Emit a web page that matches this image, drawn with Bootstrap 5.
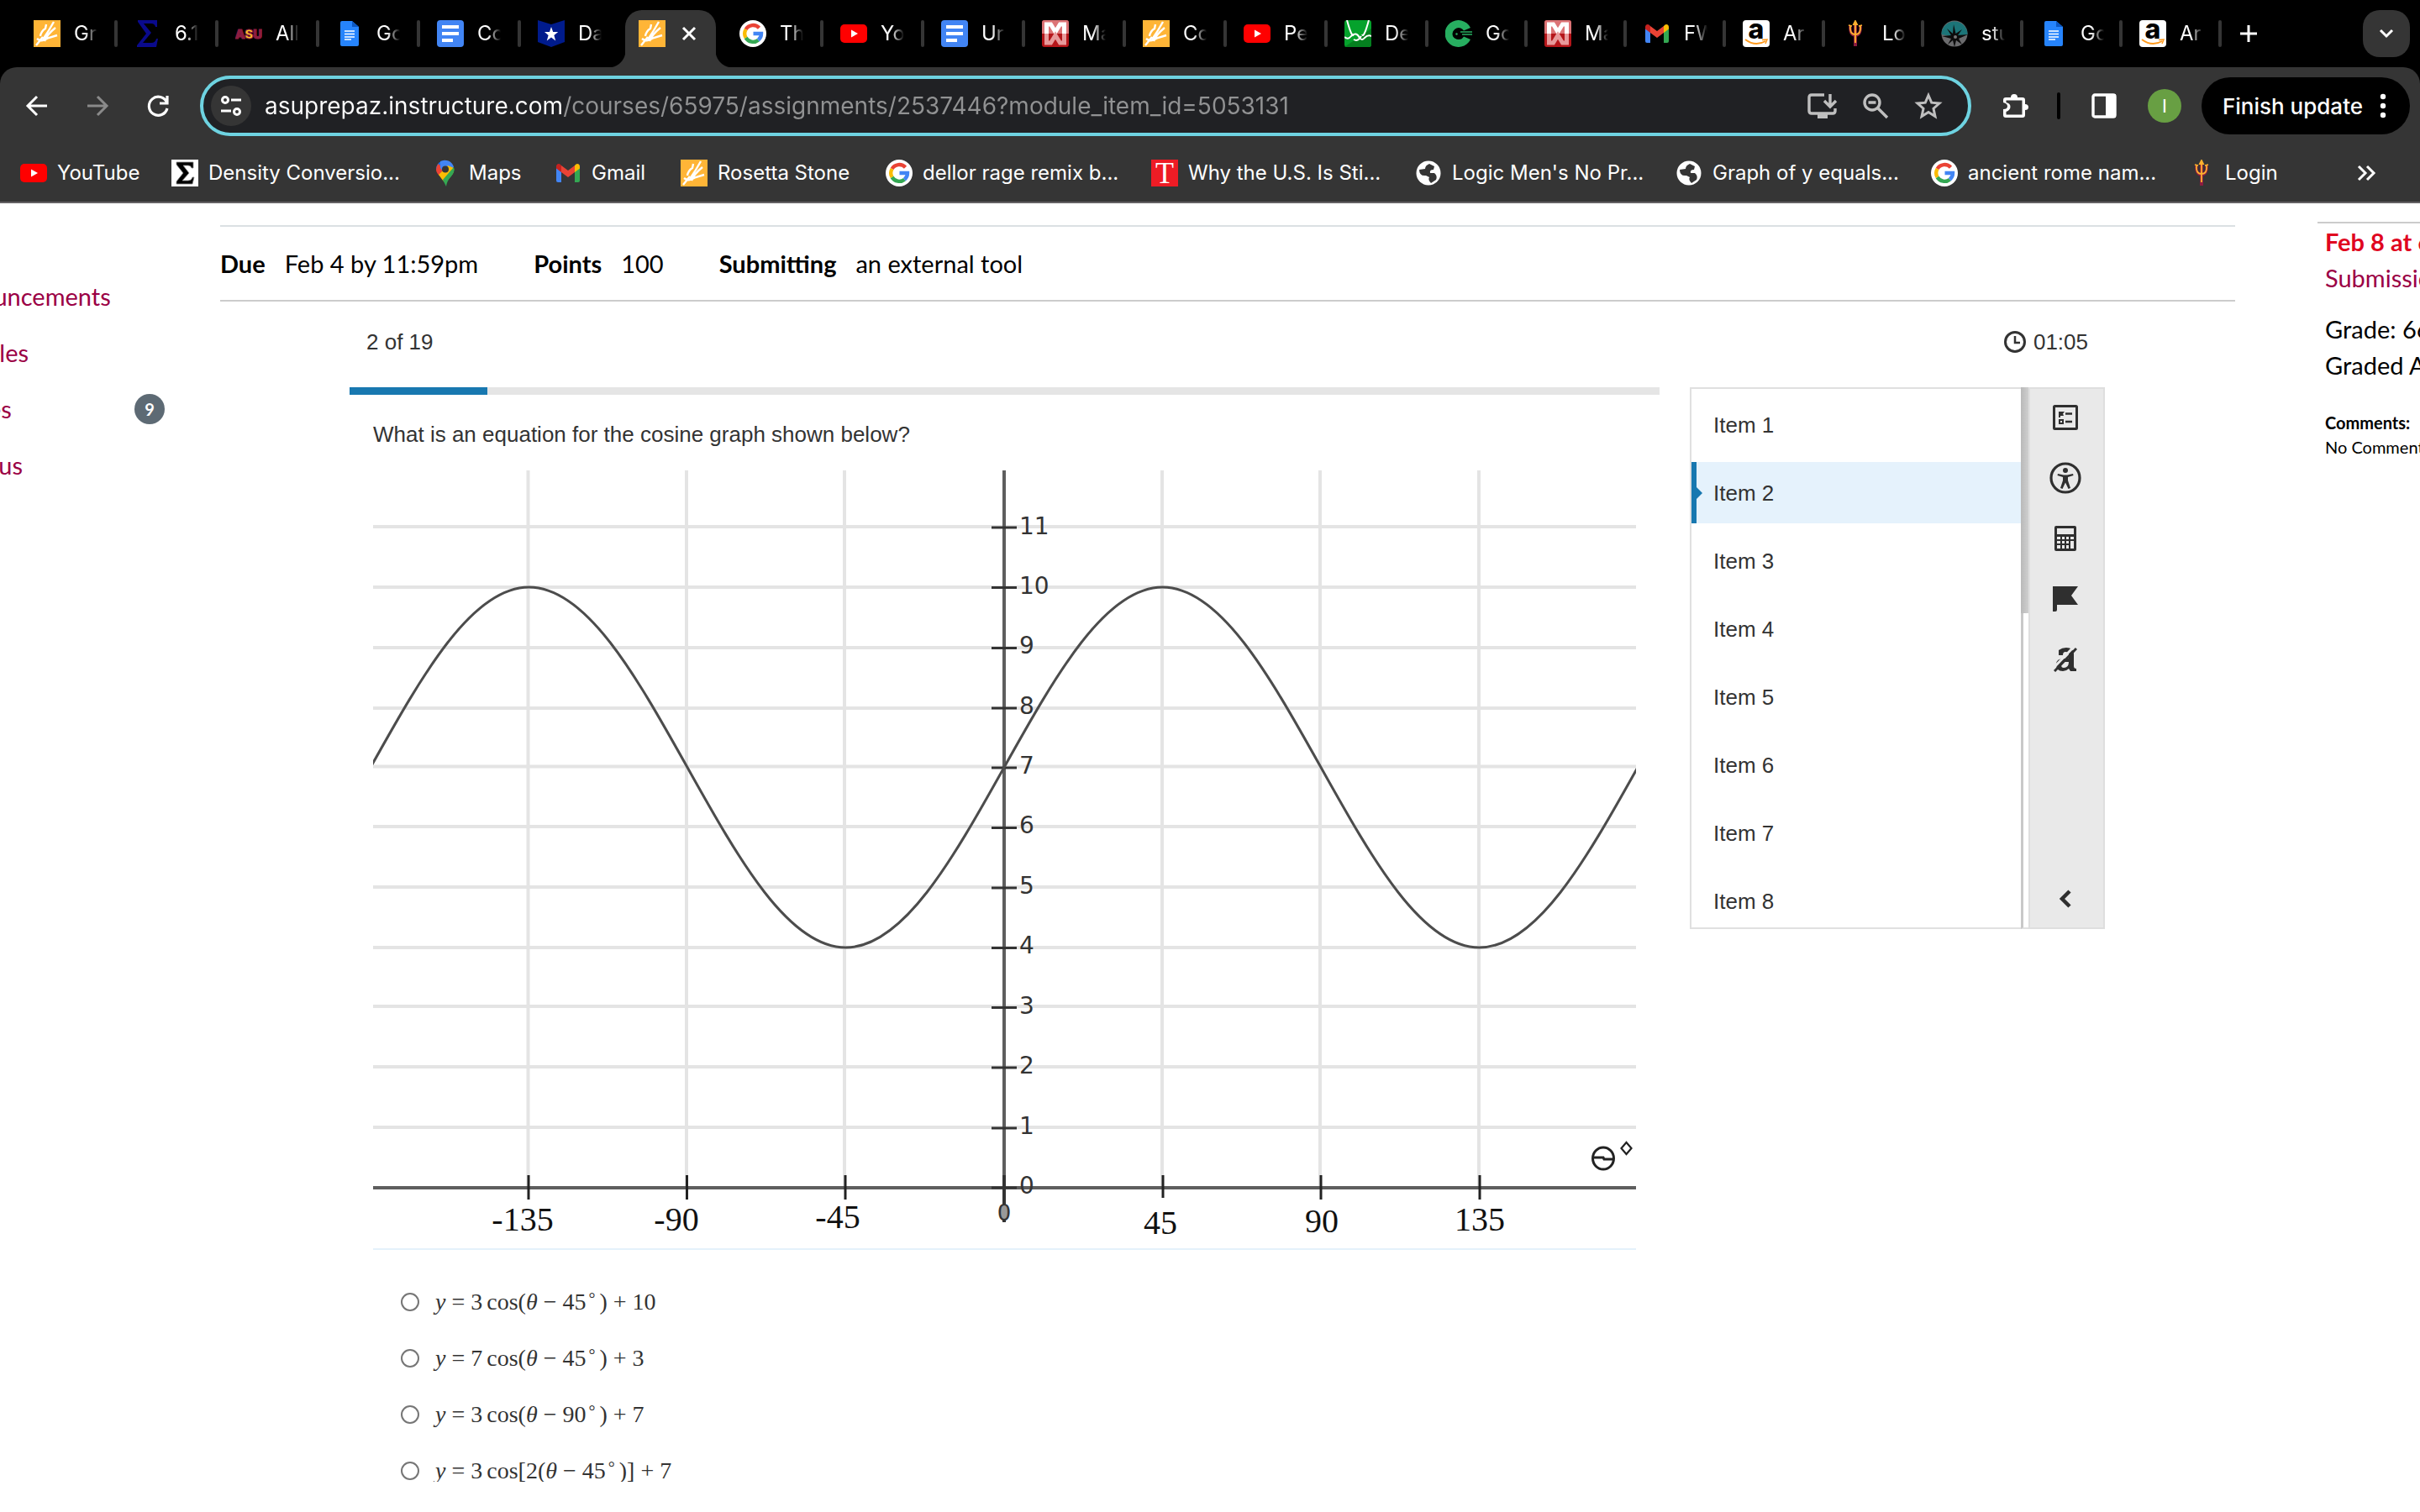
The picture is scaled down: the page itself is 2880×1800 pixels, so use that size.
<!DOCTYPE html>
<html lang="en">
<head>
<meta charset="utf-8">
<meta name="viewport" content="width=device-width, initial-scale=1">
<title>Assignment</title>
<link href="https://cdn.jsdelivr.net/npm/bootstrap@5.3.0/dist/css/bootstrap.min.css" rel="stylesheet">
<style>
  body { font-family: Lato, "Open Sans", sans-serif; font-size: 29px; color: #000; background: #fff; overflow: hidden; }
  a { text-decoration: none; }
  svg { flex: none; display: block; }
  .i32 { width: 32px; height: 32px; }
  button { padding: 0; border: 0; background: none; color: inherit; flex: none; }

  /* browser window */
  .browser { font-family: Inter, Roboto, sans-serif; color: #fff; background: #000; }
  .tabstrip { height: 80px; padding: 0 12px 0 20px; }
  .tab { position: relative; width: 120px; height: 68px; padding: 0 0 12px 20px; gap: 16px; font-size: 24px; color: #fff; flex: none; }
  .tab.slim { width: 118px; }
  .tab::after { content: ""; position: absolute; right: 0; top: 12px; width: 4px; height: 32px; border-radius: 2px; background: #353535; }
  .tab.bare::after { display: none; }
  .tab .name { width: 28px; overflow: hidden; white-space: nowrap; -webkit-mask-image: linear-gradient(90deg, #000 45%, transparent); mask-image: linear-gradient(90deg, #000 45%, transparent); }
  .tab.open { width: 108px; margin: 0 8px 0 4px; padding-left: 16px; background: #353535; border-radius: 20px 20px 0 0; }
  .tab.open::before { content: ""; position: absolute; left: -20px; right: -20px; bottom: 0; height: 20px; background: radial-gradient(circle at 0 0, transparent 20px, #353535 21px) left / 20px 20px no-repeat, radial-gradient(circle at 100% 0, transparent 20px, #353535 21px) right / 20px 20px no-repeat; }
  .tab.open::after { display: none; }
  .tabmenu { width: 56px; height: 56px; border-radius: 20px; background: #353535; }
  .toolbar { height: 92px; padding: 0 12px 0 28px; background: #353535; border-radius: 20px 20px 0 0; }
  .history { gap: 40px; }
  .omnibox { height: 72px; border: 4px solid #6ed3e1; border-radius: 36px; background: #202124; padding: 0 27px 0 9px; margin: 0 36px 0 34px; }
  .siteinfo { width: 48px; height: 48px; border-radius: 50%; background: #353535; }
  .address { border: 0; outline: 0; padding: 0; margin-left: 16px; font-size: 28px; min-width: 0; color: transparent; -webkit-text-fill-color: transparent; background: linear-gradient(90deg, #fff 354px, #919293 354px); -webkit-background-clip: text; background-clip: text; }
  .avatar { width: 40px; height: 40px; border-radius: 50%; background: #689f43; font-size: 22px; margin: 0 24px 0 36px; }
  .update { height: 68px; border-radius: 34px; background: #000; font-size: 26px; font-weight: 500; padding: 0 28px 0 25px; gap: 20px; }
  .sep { width: 4px; height: 32px; border-radius: 2px; background: #000; margin: 0 36px 0 34px; }
  .bookmarks { display: grid; grid-template-columns: 180px 310px 146px 150px 244px 316px 314px 310px 304px 306px 1fr 128px; height: 70px; padding-left: 24px; background: #353535; border-bottom: 2px solid #636163; font-size: 24px; }
  .bookmarks a { display: flex; align-items: center; gap: 12px; color: #fff; white-space: nowrap; }

  /* course page */
  .coursenav { width: 262px; flex: none; padding-top: 89px; }
  .coursenav a { color: #9b0045; line-height: 44px; height: 67px; margin-left: -76px; padding-right: 66px; }
  .count { width: 36px; height: 36px; border-radius: 50%; background: #5d6a74; color: #fff; font-size: 20px; font-weight: 700; line-height: 36px; text-align: center; }
  .facts { margin-top: 26px; height: 91px; border-top: 2px solid #dbe0e3; border-bottom: 2px solid #ccc; gap: 66px; }
  .facts dt { font-weight: 700; }
  .facts div { gap: 23px; }
  .quiz { margin: 0 155px 0 154px; font-family: "Liberation Sans", Arial, sans-serif; font-size: 26px; color: #333; }
  .quizhead { height: 102px; padding: 26px 20px 0; line-height: 44px; }
  .progress.done { height: 9px; border-radius: 0; background: #e5e5e5; --bs-progress-bar-bg: #1878b0; }
  .body-pane { padding: 0 28px; }
  .prompt { line-height: 32px; margin: 31px 0 27px; }
  .chart { width: 100%; height: auto; border-bottom: 2px solid #e4f1fb; overflow: hidden; }
  .answers { padding: 28px 0 0 33px; height: 276px; overflow: hidden; }
  .answer { height: 67px; gap: 19px; }
  .answer input { appearance: none; width: 22px; height: 22px; border: 2px solid #767676; border-radius: 50%; margin: 0; background: #fff; flex: none; }
  .math { font-family: "Liberation Serif", "Times New Roman", serif; font-size: 28px; line-height: 44px; color: #333; white-space: nowrap; }
  .math .op { padding: 0 7px; }
  .math .fn { padding-left: 5px; }
  .math sup { font-size: 20px; top: -6px; padding: 0 5px 0 3px; }
  .panel { width: 494px; height: 645px; flex: none; margin-left: 36px; }
  .items { border: 2px solid #e0e0e0; border-right: 0; overflow: hidden; padding-top: 6px; }
  .items a { position: relative; display: flex; align-items: center; height: 73px; margin-bottom: 8px; padding-left: 26px; color: #333; line-height: 32px; }
  .items a.active { background: #e5f2fc; border-left: 6px solid #1878b0; padding-left: 20px; }
  .items a.active::before { content: ""; position: absolute; left: 0; top: 30px; border: 7px solid transparent; border-left-color: #1878b0; border-right: 0; }
  .track { width: 9px; border-left: 3px solid #c8c8c8; background: #fff; border-bottom: 2px solid #e0e0e0; }
  .thumb { width: 9px; height: 269px; margin-left: -3px; background: linear-gradient(90deg, #b9b9b9, #cfcfcf); }
  .tools { width: 91px; background: #e9e9e9; border: 2px solid #dedede; color: #2f2f2f; padding: 14px 4px 14px 0; }
  .tools button { height: 40px; margin-bottom: 32px; }
  .sidebar { width: 220px; flex: none; padding: 22px 0 0 98px; overflow: hidden; white-space: nowrap; line-height: 43px; }
  .sideinner { border-top: 2px solid #ccc; padding-left: 9px; }
  .sideinner .due { color: #e0061f; font-weight: 700; }
  .sideinner a { color: #9b0045; }
  .grade { margin-top: 18px; }
  .notes { font-size: 20px; line-height: 29px; margin-top: 33px; }
</style>
</head>
<body>

<svg width="0" height="0" class="position-absolute" aria-hidden="true">
  <symbol id="fork" viewBox="0 0 32 32"><rect width="32" height="32" fill="#ffb537"/><path d="M3 30L11 20M4 22q5 4 10 1l4-2 10-3M8 19q1-6 6-9l1-5M11 23Q18 13 24 2M13 25q3-8 13-16" fill="none" stroke="#fff" stroke-width="2.400"/></symbol>
  <symbol id="sigma" viewBox="0 0 32 32"><path d="M4 0h23v8h-2q-1-4-5-4h-9l9 11-10 12h10q5 0 6-5h2l-2 10H3v-2l11-14L4 2z" fill="#0a0a8c"/></symbol>
  <symbol id="sigmaw" viewBox="0 0 32 32"><rect width="32" height="32" fill="#fff"/><path d="M6 3h20v7h-2q-1-3-4-3h-6l7 9-8 9h7q4 0 5-4h2l-2 8H6v-3l8-10-8-10z" fill="#000" stroke="#888" stroke-width=".8"/></symbol>
  <symbol id="doc" viewBox="0 0 32 32"><path d="M7 1h12l8 7v21q0 2-2 2H7q-2 0-2-2V3q0-2 2-2z" fill="#2684fc"/><path d="M19 1l8 7h-8z" fill="#0b57c2"/><path d="M10 13h12M10 16.500h12M10 20h12M10 23h8" stroke="#fff" stroke-width="1.600"/></symbol>
  <symbol id="form" viewBox="0 0 32 32"><rect width="32" height="32" rx="4" fill="#4285f4"/><path d="M6 8h20M6 16h20M6 24h13" stroke="#fff" stroke-width="4"/></symbol>
  <symbol id="shield" viewBox="0 0 32 32"><path d="M0 0l16 5L32 0v26l-16 6-16-6z" fill="#001b8c"/><path d="M16 8l2.200 6h6l-4.800 4 1.800 6.500L16 20.500l-5.200 4 1.800-6.500L8 14h6z" fill="#fff"/></symbol>
  <symbol id="google" viewBox="0 0 32 32"><circle cx="16" cy="16" r="16" fill="#fff"/><g fill="none" stroke-width="4.400"><path d="M23.500 9.200A10 10 0 0 0 7.600 11" stroke="#ea4335"/><path d="M7.600 11a10 10 0 0 0 0 10" stroke="#fbbc05"/><path d="M7.600 21a10 10 0 0 0 14.800 2.700" stroke="#34a853"/><path d="M22.400 23.700A10 10 0 0 0 26 16H16.500" stroke="#4285f4"/></g></symbol>
  <symbol id="yt" viewBox="0 0 32 32"><rect y="5" width="32" height="22" rx="5" fill="#f00"/><path d="M13 11.500v9l8-4.500z" fill="#fff"/></symbol>
  <symbol id="mm" viewBox="0 0 32 32"><rect width="32" height="32" rx="3" fill="#b5161a"/><path d="M0 16V3q0-3 3-3h26q3 0 3 3v13z" fill="#dc7476"/><path d="M5.500 16V5h5L16 14l5.500-9h5v11" fill="none" stroke="#fff" stroke-width="5"/><path d="M5.500 16v11h5L16 18l5.500 9h5V16" fill="none" stroke="#e79a9b" stroke-width="5"/></symbol>
  <symbol id="graphw" viewBox="0 0 32 32"><rect width="32" height="32" rx="3" fill="#05a22c"/><path d="M0 32L32 10v19q0 3-3 3z" fill="#04801f"/><path d="M3 0q6 22 8 17M29 0q-6 22-8 17M0 20q4 4 8-1 6-6 10 2 3 4 6 0 4-4 8-2M11 23q5 3 9-4" fill="none" stroke="#fff" stroke-width="2"/></symbol>
  <symbol id="keyc" viewBox="0 0 32 32"><path d="M30 9A16 16 0 1 0 30 23l-8-3.500q-2 3.500-6 3.500a7 7 0 1 1 6-10.500z" fill="#27ae60"/><circle cx="14" cy="16.500" r="3.500" fill="none" stroke="#000" stroke-width="4"/><circle cx="13.500" cy="16.500" r="1.200" fill="#27ae60"/><path d="M18 14h14M20 17h12" stroke="#27ae60" stroke-width="1.500"/></symbol>
  <symbol id="gmail" viewBox="0 0 32 32"><path d="M2 8v17q0 2 2 2h4V13z" fill="#4285f4"/><path d="M30 8v17q0 2-2 2h-4V13z" fill="#34a853"/><path d="M8 7l8 6 8-6v8l-8 6-8-6z" fill="#ea4335"/><path d="M2 8.500Q2 5 5 5q1.500 0 3 2v8l-6-4.500z" fill="#c5221f"/><path d="M30 8.500Q30 5 27 5q-1.500 0-3 2v8l6-4.500z" fill="#fbbc04"/></symbol>
  <symbol id="trident" viewBox="0 0 32 32"><path d="M16 4v27" stroke="#8c1d40" stroke-width="4"/><path d="M10 6q-1 12 6 12t6-12" fill="none" stroke="#8c1d40" stroke-width="3.500"/><path d="M16 3v24M10 7q-1 10 6 10t6-10M8 6l4 1M24 6l-4 1M14 5l2-4 2 4z" fill="none" stroke="#ffb02e" stroke-width="1.800"/></symbol>
  <symbol id="compass" viewBox="0 0 32 32"><circle cx="16" cy="16" r="15.500" fill="#6b6b6d"/><path d="M.5 17a15.500 15.500 0 0 1 31 0l-15 3z" fill="#1c7578"/><path d="M15 5l2.500 11L25 11l-5 7 12-1-11 5 4 7-7-5-2 8-2-8-6 5 4-7-11-3 11-1-5-8 7 6z" fill="#0c0c0c"/><circle cx="17" cy="20" r="2" fill="#777"/></symbol>
  <symbol id="pin" viewBox="0 0 32 32"><path d="M5 12A11 11 0 0 1 11 2l8 7z" fill="#1a73e8"/><path d="M5 12q0-4 2.500-7l7 6-6 8Q5 15 5 12z" fill="#ea4335"/><path d="M10 2a11 11 0 0 1 16 7l-9 9-7-8z" fill="#4285f4"/><path d="M8 18L19 7l7 3q1 5-3 9l-7 9q-4-4-8-10z" fill="#fbbc04"/><path d="M26 9q2 5-3 11-5 5-6 12-2-4-4-8z" fill="#34a853"/><circle cx="16" cy="11.500" r="4" fill="#353535"/></symbol>
  <symbol id="globe" viewBox="0 0 32 32"><circle cx="16" cy="16" r="14.500" fill="#fff"/><path d="M17 5q-5 2-5 6l-7 1q0 8 8 7l4 2q-2 3 2 7l6-4q2-5-2-8h-5q-1-4 4-4l1-4z" fill="#353535"/></symbol>
  <symbol id="smile" viewBox="0 0 32 32"><path d="M3 23q12 9 24 2" fill="none" stroke="#ff9a1c" stroke-width="2"/><path d="M23 23.500l6-.5-2 5" fill="none" stroke="#ff9a1c" stroke-width="1.500"/></symbol>
</svg>

<header class="browser">
  <nav class="tabstrip d-flex align-items-end" aria-label="Tabs">
    <a href="#" class="tab d-flex align-items-center"><svg class="i32"><use href="#fork"/></svg><span class="name">Gr</span></a>
    <a href="#" class="tab d-flex align-items-center"><svg class="i32"><use href="#sigma"/></svg><span class="name">6.1</span></a>
    <a href="#" class="tab d-flex align-items-center"><svg class="i32" viewBox="0 0 32 32"><text x="16" y="22" font-family="Inter,sans-serif" font-weight="900" font-size="15" text-anchor="middle" fill="#8c1d40" stroke="#8c1d40">A<tspan fill="#ffc627">S</tspan>U</text></svg><span class="name">All</span></a>
    <a href="#" class="tab d-flex align-items-center"><svg class="i32"><use href="#doc"/></svg><span class="name">Go</span></a>
    <a href="#" class="tab d-flex align-items-center"><svg class="i32"><use href="#form"/></svg><span class="name">Co</span></a>
    <a href="#" class="tab bare d-flex align-items-center"><svg class="i32"><use href="#shield"/></svg><span class="name">Da</span></a>
    <a href="#" class="tab open d-flex align-items-center"><svg class="i32"><use href="#fork"/></svg><svg width="24" height="24" viewBox="0 0 24 24"><path d="M5 5l14 14M19 5L5 19" stroke="#fff" stroke-width="3"/></svg></a>
    <a href="#" class="tab d-flex align-items-center"><svg class="i32"><use href="#google"/></svg><span class="name">Th</span></a>
    <a href="#" class="tab d-flex align-items-center"><svg class="i32"><use href="#yt"/></svg><span class="name">Yo</span></a>
    <a href="#" class="tab d-flex align-items-center"><svg class="i32"><use href="#form"/></svg><span class="name">Ur</span></a>
    <a href="#" class="tab d-flex align-items-center"><svg class="i32"><use href="#mm"/></svg><span class="name">Ma</span></a>
    <a href="#" class="tab d-flex align-items-center"><svg class="i32"><use href="#fork"/></svg><span class="name">Co</span></a>
    <a href="#" class="tab d-flex align-items-center"><svg class="i32"><use href="#yt"/></svg><span class="name">Pe</span></a>
    <a href="#" class="tab d-flex align-items-center"><svg class="i32"><use href="#graphw"/></svg><span class="name">De</span></a>
    <a href="#" class="tab slim d-flex align-items-center"><svg class="i32"><use href="#keyc"/></svg><span class="name">Go</span></a>
    <a href="#" class="tab slim d-flex align-items-center"><svg class="i32"><use href="#mm"/></svg><span class="name">Ma</span></a>
    <a href="#" class="tab slim d-flex align-items-center"><svg class="i32"><use href="#gmail"/></svg><span class="name">FW</span></a>
    <a href="#" class="tab slim d-flex align-items-center"><svg class="i32" viewBox="0 0 32 32"><rect width="32" height="32" rx="4" fill="#fff"/><text x="16" y="22" font-family="Inter,sans-serif" font-weight="800" font-size="32" text-anchor="middle">a</text><use href="#smile"/></svg><span class="name">Ar</span></a>
    <a href="#" class="tab slim d-flex align-items-center"><svg class="i32"><use href="#trident"/></svg><span class="name">Lo</span></a>
    <a href="#" class="tab slim d-flex align-items-center"><svg class="i32"><use href="#compass"/></svg><span class="name">stu</span></a>
    <a href="#" class="tab slim d-flex align-items-center"><svg class="i32"><use href="#doc"/></svg><span class="name">Go</span></a>
    <a href="#" class="tab slim d-flex align-items-center"><svg class="i32" viewBox="0 0 32 32"><rect width="32" height="32" rx="4" fill="#fff"/><text x="16" y="22" font-family="Inter,sans-serif" font-weight="800" font-size="32" text-anchor="middle">a</text><use href="#smile"/></svg><span class="name">Ar</span></a>
    <button class="align-self-center ms-3" aria-label="New tab"><svg class="i32" viewBox="0 0 32 32"><path d="M16 6v20M6 16h20" stroke="#fff" stroke-width="3"/></svg></button>
    <button class="tabmenu align-self-center ms-auto d-flex align-items-center justify-content-center" aria-label="Search tabs"><svg width="20" height="20" viewBox="0 0 20 20"><path d="M3 6l7 7 7-7" fill="none" stroke="#fff" stroke-width="3"/></svg></button>
  </nav>

  <div class="toolbar d-flex align-items-center">
    <div class="history d-flex">
      <button aria-label="Back"><svg class="i32" viewBox="0 0 32 32"><path d="M28 16H6M16 5L5 16l11 11" fill="none" stroke="#fff" stroke-width="3"/></svg></button>
      <button aria-label="Forward"><svg class="i32" viewBox="0 0 32 32"><path d="M4 16h22M16 5l11 11-11 11" fill="none" stroke="#8a8a8a" stroke-width="3"/></svg></button>
      <button aria-label="Reload"><svg class="i32" viewBox="0 0 32 32"><path d="M26.500 12A11 11 0 1 0 27 19M27 4v9h-9" fill="none" stroke="#fff" stroke-width="3.200"/></svg></button>
    </div>
    <div class="omnibox d-flex align-items-center flex-grow-1">
      <button class="siteinfo d-flex align-items-center justify-content-center" aria-label="Site information"><svg width="26" height="26" viewBox="0 0 26 26"><g fill="none" stroke="#fff" stroke-width="3"><circle cx="6" cy="6" r="3.500"/><path d="M13 6h12M1 19h12"/><circle cx="20" cy="20" r="3.500"/></g></svg></button>
      <input class="address flex-grow-1" type="text" aria-label="Address" value="asuprepaz.instructure.com/courses/65975/assignments/2537446?module_item_id=5053131">
      <div class="d-flex gap-4">
        <button aria-label="Install"><svg width="36" height="32" viewBox="0 0 36 32"><path d="M20 3H5q-3 0-3 3v16q0 3 3 3h25q3 0 3-3v-3" fill="none" stroke="#bfbfbf" stroke-width="3.400"/><path d="M12 26h12v5H12z" fill="#bfbfbf"/><path d="M27 2v14M20 10l7 7 7-7" fill="none" stroke="#bfbfbf" stroke-width="3.400"/></svg></button>
        <button aria-label="Zoom"><svg width="40" height="32" viewBox="-4 0 40 32"><g fill="none" stroke="#bfbfbf" stroke-width="3.400"><circle cx="13" cy="12" r="9"/><path d="M8.500 12h9M19 18l12 12"/></g></svg></button>
        <button aria-label="Bookmark"><svg width="40" height="32" viewBox="-4 0 40 32"><path d="M16 3.500l3.700 8.700 9.300.8-7 6.200 2 9.300-8-5-8 5 2-9.300L3 13l9.300-.8z" fill="none" stroke="#bfbfbf" stroke-width="3"/></svg></button>
      </div>
    </div>
    <button aria-label="Extensions"><svg class="i32" viewBox="0 0 32 32"><path d="M3 6h8q0-4 4-4t4 4h6q3 0 3 3v5q4 0 4 3.500T28 21v6q0 3-3 3H5q-3 0-3-3v-7q5 0 5-3.500T2 12V9q0-3 3-3z" fill="#fff"/><path d="M5.500 9.500h19v17h-19v-3.500q5-2 5-6t-5-5z" fill="#353535"/></svg></button>
    <div class="sep"></div>
    <button aria-label="Side panel"><svg class="i32" viewBox="0 0 32 32"><rect x="3" y="3" width="26" height="26" rx="2" fill="none" stroke="#fff" stroke-width="3.400"/><path d="M18 2h12v28H18z" fill="#fff"/></svg></button>
    <button class="avatar d-flex align-items-center justify-content-center" aria-label="Profile">I</button>
    <button class="update d-flex align-items-center">Finish update<svg width="8" height="32" viewBox="0 0 8 32"><g fill="#fff"><circle cx="4" cy="5" r="3.200"/><circle cx="4" cy="16" r="3.200"/><circle cx="4" cy="27" r="3.200"/></g></svg></button>
  </div>

  <nav class="bookmarks" aria-label="Bookmarks">
    <a href="#"><svg class="i32"><use href="#yt"/></svg>YouTube</a>
    <a href="#"><svg class="i32"><use href="#sigmaw"/></svg>Density Conversio...</a>
    <a href="#"><svg class="i32"><use href="#pin"/></svg>Maps</a>
    <a href="#"><svg class="i32"><use href="#gmail"/></svg>Gmail</a>
    <a href="#"><svg class="i32"><use href="#fork"/></svg>Rosetta Stone</a>
    <a href="#"><svg class="i32"><use href="#google"/></svg>dellor rage remix b...</a>
    <a href="#"><svg class="i32" viewBox="0 0 32 32"><rect width="32" height="32" fill="#ee1c25"/><text x="16" y="28" font-family="Liberation Serif,serif" font-size="36" text-anchor="middle" fill="#fff">T</text></svg>Why the U.S. Is Sti...</a>
    <a href="#"><svg class="i32"><use href="#globe"/></svg>Logic Men's No Pr...</a>
    <a href="#"><svg class="i32"><use href="#globe"/></svg>Graph of y equals...</a>
    <a href="#"><svg class="i32"><use href="#google"/></svg>ancient rome nam...</a>
    <a href="#"><svg class="i32"><use href="#trident"/></svg>Login</a>
    <button class="d-flex align-items-center justify-content-center" aria-label="More bookmarks"><svg width="24" height="24" viewBox="0 0 24 24"><path d="M3 4l8 8-8 8M13 4l8 8-8 8" fill="none" stroke="#fff" stroke-width="3"/></svg></button>
  </nav>
</header>

<div class="d-flex">
  <nav class="coursenav d-flex flex-column" aria-label="Course">
    <a href="#">Announcements</a>
    <a href="#">Modules</a>
    <a href="#" class="d-flex justify-content-between">Grades<span class="count mt-1">9</span></a>
    <a href="#">Syllabus</a>
  </nav>

  <main class="flex-grow-1">
    <dl class="facts d-flex align-items-center mb-0">
      <div class="d-flex"><dt>Due</dt><dd class="mb-0">Feb 4 by 11:59pm</dd></div>
      <div class="d-flex"><dt>Points</dt><dd class="mb-0">100</dd></div>
      <div class="d-flex"><dt>Submitting</dt><dd class="mb-0">an external tool</dd></div>
    </dl>

    <section class="quiz">
      <div class="quizhead d-flex justify-content-between">
        <span>2 of 19</span>
        <span class="d-flex align-items-center gap-2 align-self-start"><svg width="28" height="28" viewBox="0 0 28 28"><circle cx="14" cy="14" r="11.500" fill="none" stroke="#333" stroke-width="3"/><path d="M14 7v8h6" fill="none" stroke="#333" stroke-width="2.500"/></svg>01:05</span>
      </div>
      <div class="d-flex align-items-start">
        <div class="flex-grow-1">
          <div class="progress done" role="progressbar" aria-label="Progress" aria-valuenow="2" aria-valuemin="0" aria-valuemax="19"><div class="progress-bar" style="width:10.530%"></div></div>
          <div class="body-pane">
            <p class="prompt">What is an equation for the cosine graph shown below?</p>
            <svg class="chart" viewBox="0 0 1503 926" role="img" aria-label="Cosine graph">
              <g stroke="#e4e4e4" stroke-width="4" fill="none">
                <path d="M184.500 0V854M373 0V854M561 0V854M939 0V854M1127 0V854M1316 0V854"/>
                <path d="M0 67H1503M0 139H1503M0 211H1503M0 283H1503M0 352.500H1503M0 424H1503M0 496H1503M0 568H1503M0 638H1503M0 710H1503M0 782H1503"/>
              </g>
              <path d="M0 854H1503" stroke="#5e5e5e" stroke-width="4"/>
              <path d="M751 0V880" stroke="#5e5e5e" stroke-width="4"/>
              <path d="M736 68h30M736 139.500h30M736 211.500h30M736 283h30M736 354h30M736 425.500h30M736 497h30M736 568.500h30M736 639.500h30M736 711h30M736 783h30M736 854h30" stroke="#333" stroke-width="3"/>
              <path d="M185 839v29M373.500 839v29M562 839v29M940 839v27M1128 839v29M1317 839v29" stroke="#222" stroke-width="3"/>
              <path d="M751 839v56" stroke="#333" stroke-width="4"/>
              <path d="M-3 353.500C58.500 243.600 117.300 139 185.500 139C253.700 139 312.500 243.600 374 353.500C435.500 463.400 494.300 568 562.500 568C630.700 568 689.500 463.400 751 353.500C812.500 243.600 871.300 139 939.500 139C1007.700 139 1066.500 243.600 1128 353.500C1189.500 463.400 1248.300 568 1316.500 568C1384.700 568 1443.500 463.400 1505 353.500" fill="none" stroke="#4c4c4c" stroke-width="3"/>
              <g font-family="DejaVu Sans, sans-serif" font-size="28" fill="#333">
                <text x="769" y="76">11</text><text x="769" y="147">10</text><text x="769" y="218">9</text><text x="769" y="290">8</text><text x="769" y="361">7</text><text x="769" y="432">6</text><text x="769" y="504">5</text><text x="769" y="575">4</text><text x="769" y="647">3</text><text x="769" y="718">2</text><text x="769" y="790">1</text><text x="769" y="861">0</text>
                <ellipse cx="751" cy="883" rx="5" ry="9" fill="#999"/>
                <text x="751" y="893" text-anchor="middle" font-size="26">0</text>
              </g>
              <g font-family="Liberation Serif, serif" font-size="40" fill="#111" text-anchor="middle">
                <text x="178" y="905">-135</text><text x="361" y="905">-90</text><text x="553" y="902">-45</text><text x="937" y="909">45</text><text x="1129" y="907">90</text><text x="1317" y="905">135</text>
              </g>
              <g fill="none" stroke="#222" stroke-width="3"><ellipse cx="1464" cy="819" rx="12.500" ry="13"/><path d="M1453 818h11l1 2h11"/><path d="M1491.500 800l6 7-6 7-6-7z" stroke-width="2.200"/></g>
            </svg>
            <div class="answers">
              <label class="answer d-flex align-items-center"><input type="radio" name="answer"><span class="math"><i>y</i><span class="op">=</span>3<span class="fn">cos</span>(<i>θ</i><span class="op">−</span>45<sup>°</sup>)<span class="op">+</span>10</span></label>
              <label class="answer d-flex align-items-center"><input type="radio" name="answer"><span class="math"><i>y</i><span class="op">=</span>7<span class="fn">cos</span>(<i>θ</i><span class="op">−</span>45<sup>°</sup>)<span class="op">+</span>3</span></label>
              <label class="answer d-flex align-items-center"><input type="radio" name="answer"><span class="math"><i>y</i><span class="op">=</span>3<span class="fn">cos</span>(<i>θ</i><span class="op">−</span>90<sup>°</sup>)<span class="op">+</span>7</span></label>
              <label class="answer d-flex align-items-center"><input type="radio" name="answer"><span class="math"><i>y</i><span class="op">=</span>3<span class="fn">cos</span>[2(<i>θ</i><span class="op">−</span>45<sup>°</sup>)]<span class="op">+</span>7</span></label>
            </div>
          </div>
        </div>

        <aside class="panel d-flex">
          <nav class="items flex-grow-1" aria-label="Items">
            <a href="#">Item 1</a>
            <a href="#" class="active" aria-current="true">Item 2</a>
            <a href="#">Item 3</a>
            <a href="#">Item 4</a>
            <a href="#">Item 5</a>
            <a href="#">Item 6</a>
            <a href="#">Item 7</a>
            <a href="#">Item 8</a>
          </nav>
          <div class="track"><div class="thumb"></div></div>
          <div class="tools d-flex flex-column align-items-center">
            <button aria-label="Item list"><svg width="30" height="30" viewBox="0 0 30 30"><rect x="1.500" y="1.500" width="27" height="27" rx="1" fill="none" stroke="currentColor" stroke-width="3"/><path d="M15 10.500h8M15 20h8" stroke="currentColor" stroke-width="2.500"/><path d="M7 8h7l-2 2.500 1 2.500H9v2H7z" fill="currentColor"/><rect x="8" y="18" width="4" height="4" fill="none" stroke="currentColor" stroke-width="2"/></svg></button>
            <button aria-label="Accessibility"><svg width="38" height="38" viewBox="0 0 38 38"><circle cx="19" cy="19" r="17" fill="none" stroke="currentColor" stroke-width="3.200"/><circle cx="19" cy="10" r="3" fill="currentColor"/><path d="M10 14l7 1.500h4l7-1.500.5 2-6.500 2v4l3 9-2.500 1L19 24.500 15.500 32l-2.500-1 3-9v-4l-6.500-2z" fill="currentColor"/></svg></button>
            <button aria-label="Calculator"><svg width="26" height="30" viewBox="0 0 26 30"><rect width="26" height="30" rx="2" fill="currentColor"/><path d="M3 3h20v7H3z" fill="#e9e9e9"/><path d="M3 13h4v3H3zM9 13h3v3H9zM14 13h3v3h-3zM19 13h4v3h-4zM3 18h4v3H3zM9 18h3v3H9zM14 18h3v3h-3zM3 23h4v4H3zM9 23h3v4H9zM14 23h3v4h-3zM19 18h4v9h-4z" fill="#e9e9e9"/></svg></button>
            <button aria-label="Flag"><svg width="30" height="30" viewBox="0 0 30 30"><path d="M0 0h30l-8 11 8 11H5v6q0 2-2 2H0z" fill="currentColor"/></svg></button>
            <button aria-label="Answer eliminator"><svg width="28" height="30" viewBox="0 0 28 30"><path d="M6 10V4q4-3 9-3 9 0 9 8v14q0 3 3 3v3h-7l-2-3q-3 3-7 3-8 0-8-8 0-7 9-7h6V9q0-3-4-3-3 0-3 4zM18 18h-5q-4 0-4 3.500T12 25q6 0 6-7z" fill="currentColor" fill-rule="evenodd"/><path d="M-1 26L25-1" stroke="#e9e9e9" stroke-width="3"/><path d="M1 29L27 2" stroke="currentColor" stroke-width="3"/></svg></button>
            <button class="mt-auto mb-0" aria-label="Collapse"><svg width="16" height="22" viewBox="0 0 16 22"><path d="M13 2L4 11l9 9" fill="none" stroke="currentColor" stroke-width="4.500"/></svg></button>
          </div>
        </aside>
      </div>
    </section>
  </main>

  <aside class="sidebar">
    <div class="sideinner">
      <div class="due">Feb 8 at 6:30pm</div>
      <a href="#">Submission Details</a>
      <div class="grade">Grade: 66</div>
      <div>Graded Anonymously: no</div>
      <div class="notes"><strong>Comments:</strong><br>No Comments</div>
    </div>
  </aside>
</div>

<script src="https://cdn.jsdelivr.net/npm/bootstrap@5.3.0/dist/js/bootstrap.bundle.min.js"></script>
</body>
</html>
